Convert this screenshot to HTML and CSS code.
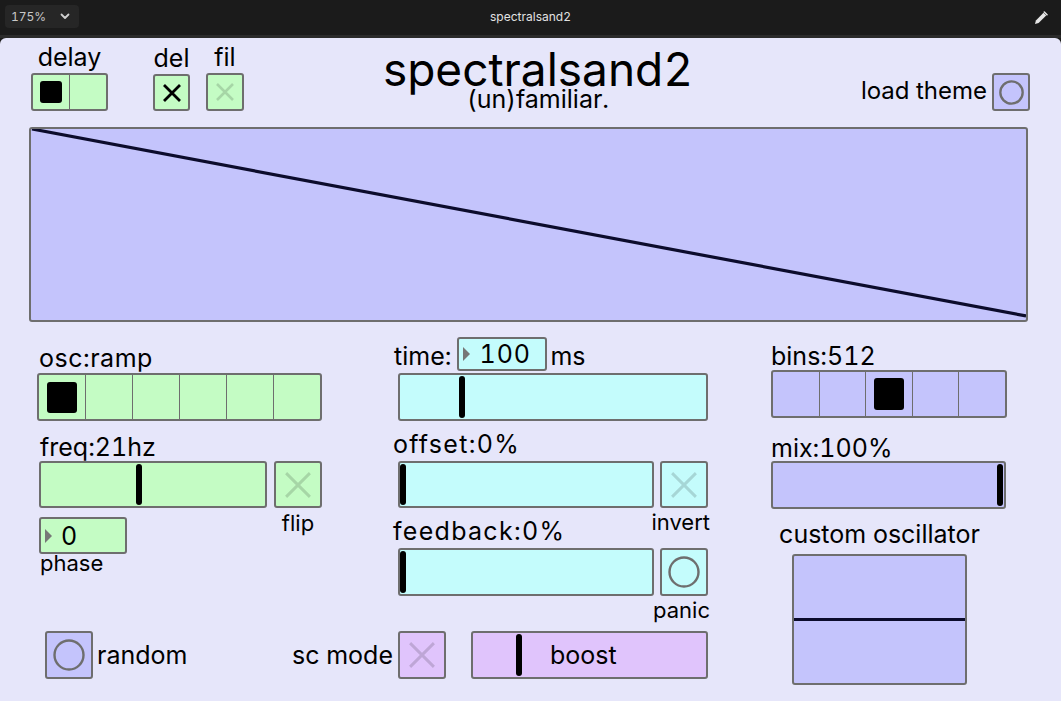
FILE: index.html
```html
<!DOCTYPE html>
<html lang="en">
<head>
  <meta charset="UTF-8" />
  <meta name="viewport" content="width=device-width, initial-scale=1.0">
  <title>spectralsand2</title>
  <link rel="stylesheet" href="styles.css">
</head>
<body>

  <!-- window bar -->
  <div class="topbar">
    <div class="zoom-select">
      <span>175%</span>
      <svg width="10" height="7" viewBox="0 0 10 7"><path d="M1.5 1.5l3.5 3.5 3.5-3.5" fill="none" stroke="#cfcfcf" stroke-width="1.8" stroke-linecap="round" stroke-linejoin="round"/></svg>
    </div>
    <div class="app-title">spectralsand2</div>
    <div class="edit-btn">
      <svg width="14" height="14" viewBox="0 0 14 14">
        <path d="M1 13l0.9-3.6 7.6-7.6 2.7 2.7-7.6 7.6z" fill="#e6e6e6"/>
        <path d="M10.3 1l2.7 2.7" stroke="#e6e6e6" stroke-width="1.6" stroke-linecap="round"/>
      </svg>
    </div>
  </div>

  <div class="patch">

    <!-- header: delay mode, title, theme -->
    <div class="patch-head">
      <div class="head-left">
        <div class="widget">
          <span class="label">delay</span>
          <div class="radio green radio-delay">
            <div class="cell"><div class="dot"></div></div>
            <div class="cell"></div>
          </div>
        </div>
        <div class="widget w-del">
          <span class="label">del</span>
          <div class="toggle green toggle-sm">
            <svg class="x x-sm" viewBox="0 0 20 20"><path d="M2 2L18 18M18 2L2 18" stroke="#000" stroke-width="2.8"/></svg>
          </div>
        </div>
        <div class="widget w-fil">
          <span class="label">fil</span>
          <div class="toggle green toggle-sm">
            <svg class="x x-sm" viewBox="0 0 20 20"><path d="M2 2L18 18M18 2L2 18" stroke="rgba(0,0,0,0.15)" stroke-width="2.6"/></svg>
          </div>
        </div>
      </div>

      <div class="head-title">
        <div class="title">spectralsand2</div>
        <div class="subtitle">(un)familiar.</div>
      </div>

      <div class="head-right">
        <span class="label lbl-theme">load theme</span>
        <div class="bang blue bang-sm">
          <svg class="ring ring-sm" viewBox="0 0 32 32"><circle cx="16" cy="16" r="14.3" fill="none" stroke="#6e6e6e" stroke-width="3"/></svg>
        </div>
      </div>
    </div>

    <!-- waveform array -->
    <div class="graph graph-main blue">
      <svg viewBox="0 0 995 191" preserveAspectRatio="none">
        <line x1="1" y1="0" x2="995" y2="187" stroke="#0c0c2c" stroke-width="3.2"/>
      </svg>
    </div>

    <div class="controls">
      <div class="controls-main">
        <div class="columns">

          <!-- oscillator -->
          <div class="col col-osc">
            <div class="label lbl-osc">osc:ramp</div>
            <div class="radio green radio-osc">
              <div class="cell"><div class="dot"></div></div>
              <div class="cell"></div>
              <div class="cell"></div>
              <div class="cell"></div>
              <div class="cell"></div>
              <div class="cell"></div>
            </div>
            <div class="label lbl-freq">freq:21hz</div>
            <div class="ctl-row row-freq">
              <div class="slider green slider-freq">
                <div class="handle" style="left: 95px"></div>
              </div>
              <div class="toggle green">
                <svg class="x" viewBox="0 0 20 20"><path d="M1.5 1.5L18.5 18.5M18.5 1.5L1.5 18.5" stroke="rgba(0,0,0,0.15)" stroke-width="2.1"/></svg>
              </div>
            </div>
            <div class="sub-row">
              <div class="phase-group">
                <div class="numbox green numbox-phase">
                  <span class="arrow"></span><span class="num">0</span>
                </div>
                <div class="small lbl-phase">phase</div>
              </div>
              <div class="small lbl-flip">flip</div>
            </div>
          </div>

          <!-- delay line -->
          <div class="col col-delay">
            <div class="time-row">
              <span class="label lbl-time">time:</span>
              <div class="numbox cyan numbox-time">
                <span class="arrow"></span><span class="num">100</span>
              </div>
              <span class="label lbl-ms">ms</span>
            </div>
            <div class="slider cyan slider-time">
              <div class="handle" style="left: 59px"></div>
            </div>
            <div class="label lbl-offset">offset:0%</div>
            <div class="ctl-row row-offset">
              <div class="slider cyan slider-half">
                <div class="handle" style="left: 0px"></div>
              </div>
              <div class="toggle cyan">
                <svg class="x" viewBox="0 0 20 20"><path d="M1.5 1.5L18.5 18.5M18.5 1.5L1.5 18.5" stroke="rgba(0,0,0,0.15)" stroke-width="2.1"/></svg>
              </div>
            </div>
            <div class="label-row">
              <span class="label lbl-feedback">feedback:0%</span>
              <span class="small lbl-invert">invert</span>
            </div>
            <div class="ctl-row row-feedback">
              <div class="slider cyan slider-half">
                <div class="handle" style="left: 0px"></div>
              </div>
              <div class="bang cyan">
                <svg class="ring" viewBox="0 0 32 32"><circle cx="16" cy="16" r="14.5" fill="none" stroke="#6e6e6e" stroke-width="2.4"/></svg>
              </div>
            </div>
            <div class="small lbl-panic">panic</div>
          </div>
        </div>

        <div class="bottom-row">
          <div class="bottom-left">
            <div class="bang blue">
              <svg class="ring" viewBox="0 0 32 32"><circle cx="16" cy="16" r="14.5" fill="none" stroke="#6e6e6e" stroke-width="2.4"/></svg>
            </div>
            <span class="label">random</span>
          </div>
          <div class="bottom-right">
            <span class="label">sc mode</span>
            <div class="toggle purple toggle-sc">
              <svg class="x" viewBox="0 0 20 20"><path d="M1.5 1.5L18.5 18.5M18.5 1.5L1.5 18.5" stroke="rgba(0,0,0,0.15)" stroke-width="2.1"/></svg>
            </div>
            <div class="slider purple slider-boost">
              <div class="handle" style="left: 43px"></div>
              <span class="label">boost</span>
            </div>
          </div>
        </div>
      </div>

      <!-- spectral output -->
      <div class="col col-out">
        <div class="label lbl-bins">bins:512</div>
        <div class="radio blue radio-bins">
          <div class="cell"></div>
          <div class="cell"></div>
          <div class="cell"><div class="dot"></div></div>
          <div class="cell"></div>
          <div class="cell"></div>
        </div>
        <div class="label lbl-mix">mix:100%</div>
        <div class="slider blue slider-mix">
          <div class="handle" style="left: 224px"></div>
        </div>
        <div class="custom-osc">
          <div class="label lbl-custom">custom oscillator</div>
          <div class="graph graph-osc blue">
            <svg viewBox="0 0 171 127" preserveAspectRatio="none">
              <line x1="0" y1="63.5" x2="171" y2="63.5" stroke="#0c0c2c" stroke-width="3"/>
            </svg>
          </div>
        </div>
      </div>
    </div>

  </div>

</body>
</html>
```

FILE: styles.css
```css
* {
  box-sizing: border-box;
}

body {
  margin: 0;
  background-color: #1b1b1b;
  font-family: Inter, "Noto Sans", sans-serif;
  font-variant-numeric: tabular-nums;
  color: #000;
  overflow: hidden;
}

/* --- window bar --- */

.topbar {
  height: 38px;
  border-bottom: 3px solid #2b2b2b;
  display: grid;
  grid-template-columns: 1fr auto 1fr;
  align-items: center;
}

.zoom-select {
  align-self: start;
  margin: 5px 0 0 5px;
  width: 74px;
  height: 23px;
  padding: 0 9px 0 6px;
  background-color: #262626;
  border-radius: 4px;
  display: flex;
  align-items: center;
  justify-content: space-between;
  color: #c8c8c8;
  font-size: 12px;
}

.app-title {
  color: #e2e2e2;
  font-size: 12px;
  margin-top: -2px;
}

.edit-btn {
  justify-self: end;
  margin: -3px 13px 0 0;
  height: 14px;
}

/* --- patch canvas --- */

.patch {
  background-color: #e6e6fa;
  border-radius: 6px 6px 0 0;
  height: 663px;
  overflow: hidden;
}

.label {
  font-size: 25px;
  line-height: 24px;
  white-space: nowrap;
}

.small {
  font-size: 22px;
  line-height: 20px;
  white-space: nowrap;
}

.green  { background-color: #c4fcc4; }
.cyan   { background-color: #c4fcfc; }
.blue   { background-color: #c4c4fc; }
.purple { background-color: #e0c4fc; }

.radio,
.toggle,
.bang,
.slider,
.numbox,
.graph {
  border: 2px solid #6e6e6e;
  border-radius: 3px;
}

.radio {
  display: flex;
}

.radio .cell {
  flex: 1;
  display: flex;
  align-items: center;
  justify-content: center;
}

.radio .cell + .cell {
  border-left: 1px solid #6e6e6e;
}

.dot {
  background-color: #000;
  border-radius: 3px;
}

.toggle,
.bang {
  width: 48px;
  height: 47px;
  display: flex;
  align-items: center;
  justify-content: center;
  flex-shrink: 0;
}

.bang {
  height: 48px;
}

.x {
  width: 28px;
  height: 28px;
}

.ring {
  width: 32px;
  height: 32px;
}

.slider {
  position: relative;
  height: 47px;
}

.handle {
  position: absolute;
  top: 1px;
  bottom: 1px;
  width: 6px;
  background-color: #000;
  border-radius: 3px;
}

.numbox {
  display: flex;
  align-items: center;
  padding-left: 4px;
}

.numbox .arrow {
  width: 0;
  height: 0;
  border-top: 7px solid transparent;
  border-bottom: 7px solid transparent;
  border-left: 7px solid #777;
}

.numbox .num {
  font-size: 25px;
  line-height: 24px;
  letter-spacing: 1px;
}

.graph svg {
  display: block;
  width: 100%;
  height: 100%;
}

/* --- header --- */

.patch-head {
  display: grid;
  grid-template-columns: 1fr auto 1fr;
  align-items: end;
  height: 71px;
  padding: 0 31px;
}

.head-left {
  display: flex;
  align-items: flex-end;
}

.widget {
  display: flex;
  flex-direction: column;
  align-items: center;
}

.widget .label {
  margin-bottom: 4px;
}

.w-del { margin-left: 45px; }
.w-fil { margin-left: 16px; }

.radio-delay {
  width: 77px;
  height: 38px;
}

.radio-delay .dot {
  width: 22px;
  height: 22px;
}

.toggle-sm {
  width: 37px;
  height: 37px;
}

.w-fil .toggle-sm {
  width: 38px;
  height: 38px;
}

.x-sm {
  width: 20px;
  height: 20px;
}

.head-title {
  align-self: start;
  margin: 9px 0 0 15px;
  text-align: center;
}

.title {
  font-size: 46px;
  line-height: 44px;
}

.subtitle {
  font-size: 25px;
  line-height: 24px;
  margin-top: -4px;
}

.head-right {
  display: flex;
  align-items: flex-end;
  justify-content: flex-end;
  gap: 5px;
}

.head-right .label {
  margin-bottom: 8px;
}

.lbl-theme {
  font-size: 24px;
}

.bang-sm {
  width: 38px;
  height: 38px;
}

.ring-sm {
  width: 25px;
  height: 25px;
}

.graph-main {
  margin: 18px 0 0 29px;
  width: 999px;
  height: 195px;
}

/* --- control columns --- */

.controls {
  display: flex;
  align-items: flex-start;
}

.controls-main {
  width: 770px;
}

.columns {
  display: flex;
  align-items: flex-start;
}

.col-osc {
  margin-left: 37px;
  width: 285px;
}

.lbl-osc {
  margin-top: 24px;
  padding-left: 2px;
  letter-spacing: 0.5px;
}

.radio-osc {
  margin-top: 3px;
  height: 48px;
}

.radio-osc .dot {
  width: 30px;
  height: 31px;
}

.lbl-freq {
  margin-top: 14px;
  padding-left: 3px;
}

.ctl-row {
  display: flex;
  gap: 7px;
}

.row-freq {
  margin-top: 2px;
  padding-left: 2px;
}

.slider-freq {
  width: 228px;
}

.sub-row {
  display: flex;
  justify-content: space-between;
  padding-left: 2px;
}

.numbox-phase {
  margin-top: 9px;
  width: 88px;
  height: 37px;
}

.numbox-phase .num {
  margin-left: 9px;
}

.lbl-phase {
  margin-top: -1px;
  padding-left: 1px;
}

.lbl-flip {
  width: 48px;
  margin-top: 5px;
  text-align: center;
}

.col-delay {
  margin-left: 71px;
  width: 317px;
}

.time-row {
  margin-top: 15px;
  display: flex;
  align-items: flex-start;
}

.lbl-time {
  margin: 7px 0 0 1px;
}

.numbox-time {
  margin-left: 6px;
  width: 90px;
  height: 34px;
}

.numbox-time .num {
  margin-left: 9px;
}

.lbl-ms {
  margin: 7px 0 0 3px;
}

.slider-time {
  margin: 2px 0 0 5px;
  width: 310px;
  height: 48px;
}

.lbl-offset {
  margin-top: 11px;
  letter-spacing: 1.3px;
}

.row-offset {
  margin: 5px 0 0 5px;
  gap: 6px;
}

.row-feedback {
  margin: 5px 0 0 5px;
  gap: 6px;
}

.slider-half {
  width: 256px;
}

.row-feedback .slider-half {
  height: 48px;
}

.label-row {
  display: flex;
  justify-content: space-between;
  align-items: flex-start;
}

.lbl-feedback {
  margin-top: 11px;
  letter-spacing: 1.3px;
}

.lbl-invert {
  margin-top: 4px;
}

.lbl-panic {
  margin-top: 4px;
  text-align: right;
}

/* --- bottom row --- */

.bottom-row {
  margin: 11px 0 0 45px;
  width: 663px;
  display: flex;
  justify-content: space-between;
  align-items: center;
}

.bottom-left,
.bottom-right {
  display: flex;
  align-items: center;
}

.bottom-left {
  gap: 4px;
}

.toggle-sc {
  margin-left: 5px;
  height: 48px;
}

.slider-boost {
  margin-left: 25px;
  width: 237px;
  height: 48px;
  display: flex;
  align-items: center;
  padding-left: 77px;
}

/* --- output column --- */

.col-out {
  width: 238px;
}

.lbl-bins {
  margin-top: 22px;
  padding-left: 1px;
}

.radio-bins {
  margin: 2px 0 0 1px;
  width: 236px;
  height: 48px;
}

.radio-bins .dot {
  width: 30px;
  height: 32px;
}

.lbl-mix {
  margin-top: 18px;
  padding-left: 1px;
}

.slider-mix {
  margin: 1px 0 0 1px;
  width: 235px;
  height: 48px;
}

.custom-osc {
  margin-left: 22px;
  width: 175px;
  display: flex;
  flex-direction: column;
  align-items: center;
}

.lbl-custom {
  margin-top: 13px;
}

.graph-osc {
  margin-top: 8px;
  width: 175px;
  height: 131px;
}
```
